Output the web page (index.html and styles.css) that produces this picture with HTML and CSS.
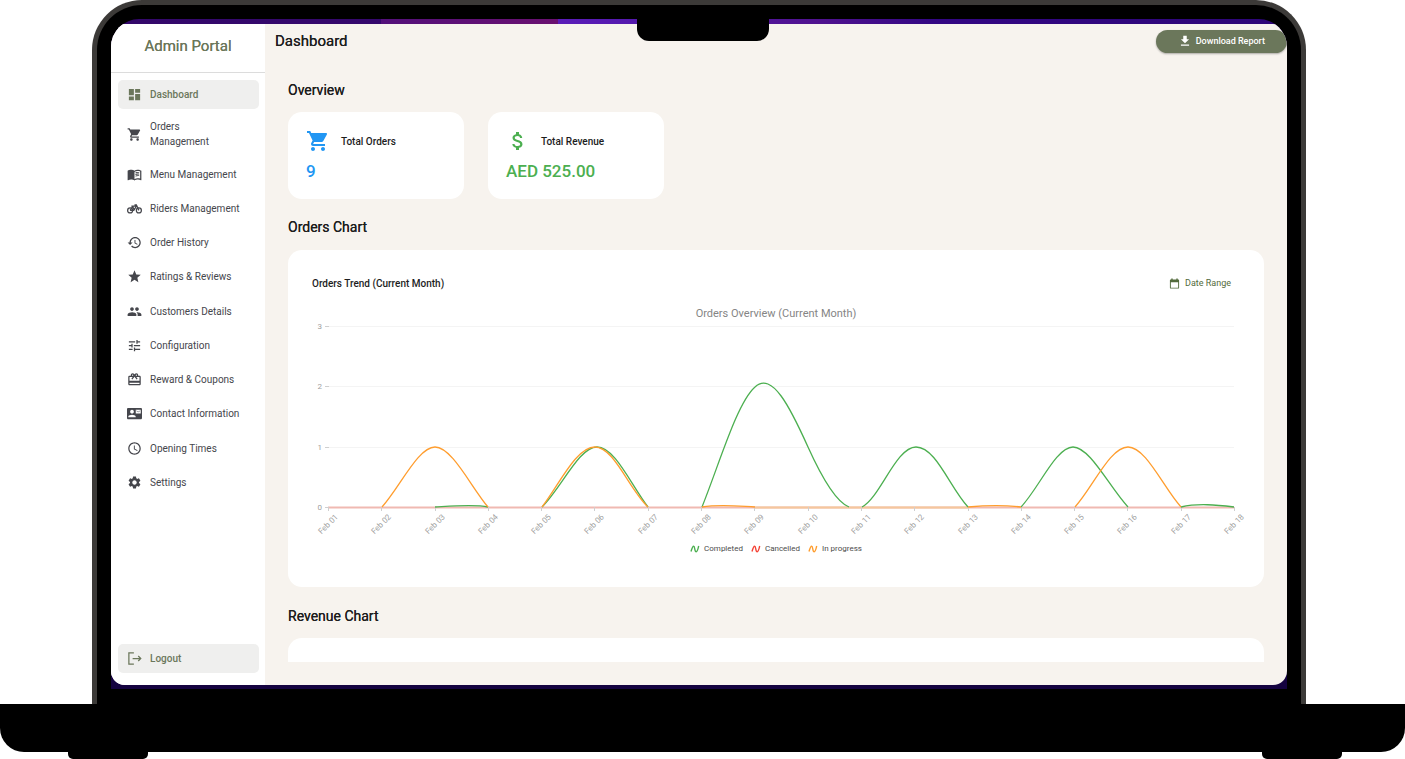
FILE: index.html
```html
<!DOCTYPE html>
<html lang="en">
<head>
    <meta charset="UTF-8">
    <title>Admin Portal</title>
    <meta name="viewport" content="width=device-width, initial-scale=1">
    <link rel="stylesheet" href="styles.css">
</head>
<body>
    <svg class="sprite" aria-hidden="true">
        <symbol id="i-cart" viewBox="0 0 24 24"><path d="M7 18c-1.1 0-1.99.9-1.99 2S5.9 22 7 22s2-.9 2-2-.9-2-2-2zM1 2v2h2l3.6 7.59-1.35 2.45c-.16.28-.25.61-.25.96 0 1.1.9 2 2 2h12v-2H7.42c-.14 0-.25-.11-.25-.25l.03-.12.9-1.63h7.45c.75 0 1.41-.41 1.75-1.03l3.58-6.49c.08-.14.12-.31.12-.48 0-.55-.45-1-1-1H5.21l-.94-2H1zm16 16c-1.1 0-1.99.9-1.99 2s.89 2 1.99 2 2-.9 2-2-.9-2-2-2z"/></symbol>
        <symbol id="i-dashboard" viewBox="0 0 24 24"><path d="M3 13h8V3H3v10zm0 8h8v-6H3v6zm10 0h8V11h-8v10zm0-18v6h8V3h-8z"/></symbol>
        <symbol id="i-book" viewBox="0 0 24 24"><path d="M21 5c-1.11-.35-2.33-.5-3.5-.5-1.95 0-4.05.4-5.5 1.5-1.45-1.1-3.55-1.5-5.5-1.5S2.45 4.9 1 6v14.65c0 .25.25.5.5.5.1 0 .15-.05.25-.05C3.1 20.45 5.05 20 6.5 20c1.95 0 4.05.4 5.5 1.5 1.35-.85 3.8-1.5 5.5-1.5 1.65 0 3.35.3 4.75 1.05.1.05.15.05.25.05.25 0 .5-.25.5-.5V6c-.6-.45-1.25-.75-2-1zm0 13.5c-1.1-.35-2.3-.5-3.5-.5-1.7 0-4.15.65-5.5 1.5V8c1.35-.85 3.8-1.5 5.5-1.5 1.2 0 2.4.15 3.5.5v11.5z"/><path d="M13.5 10c1.8-.8 4-1 6-.7V8c-2-.3-4.2-.1-6 .6V10zm0 2.700c1.8-.8 4-1 6-.7v-1.300c-2-.3-4.2-.1-6 .6v1.400zm0 2.600c1.8-.8 4-1 6-.7v-1.300c-2-.3-4.2-.1-6 .6v1.400z"/></symbol>
        <symbol id="i-bike" viewBox="0 0 24 24"><g fill="none" stroke="currentColor" stroke-width="2"><circle cx="5" cy="15" r="4"/><circle cx="19" cy="15" r="4"/><path d="M5 15h6l4-7H9l2.5 7M12 6h3l4 9M7 8h4M5 15l4-6"/></g></symbol>
        <symbol id="i-history" viewBox="0 0 24 24"><path d="M13 3c-4.97 0-9 4.03-9 9H1l3.89 3.89.07.14L9 12H6c0-3.87 3.13-7 7-7s7 3.13 7 7-3.13 7-7 7c-1.93 0-3.68-.79-4.94-2.06l-1.42 1.42C8.27 19.99 10.51 21 13 21c4.97 0 9-4.03 9-9s-4.03-9-9-9zm-1 5v5l4.28 2.54.72-1.21-3.5-2.08V8H12z"/></symbol>
        <symbol id="i-star" viewBox="0 0 24 24"><path d="M12 17.27L18.18 21l-1.64-7.03L22 9.24l-7.19-.61L12 2 9.19 8.63 2 9.24l5.46 4.73L5.82 21z"/></symbol>
        <symbol id="i-people" viewBox="0 0 24 24"><path d="M16 11c1.66 0 2.99-1.34 2.99-3S17.66 5 16 5s-3 1.34-3 3 1.34 3 3 3zm-8 0c1.66 0 2.99-1.34 2.99-3S9.66 5 8 5 5 6.34 5 8s1.34 3 3 3zm0 2c-2.33 0-7 1.17-7 3.5V19h14v-2.5c0-2.33-4.67-3.5-7-3.5zm8 0c-.29 0-.62.02-.97.05 1.16.84 1.97 1.97 1.97 3.45V19h6v-2.5c0-2.33-4.67-3.5-7-3.5z"/></symbol>
        <symbol id="i-tune" viewBox="0 0 24 24"><path d="M3 17v2h6v-2H3zM3 5v2h10V5H3zm10 16v-2h8v-2h-8v-2h-2v6h2zM7 9v2H3v2h4v2h2V9H7zm14 4v-2H11v2h10zm-6-4h2V7h4V5h-4V3h-2v6z"/></symbol>
        <symbol id="i-gift" viewBox="0 0 24 24"><path d="M20 6h-2.18c.11-.31.18-.65.18-1 0-1.66-1.34-3-3-3-1.05 0-1.96.54-2.5 1.35l-.5.67-.5-.68C10.96 2.54 10.05 2 9 2 7.34 2 6 3.34 6 5c0 .35.07.69.18 1H4c-1.11 0-1.99.89-1.99 2L2 19c0 1.11.89 2 2 2h16c1.11 0 2-.89 2-2V8c0-1.11-.89-2-2-2zm-5-2c.55 0 1 .45 1 1s-.45 1-1 1-1-.45-1-1 .45-1 1-1zM9 4c.55 0 1 .45 1 1s-.45 1-1 1-1-.45-1-1 .45-1 1-1zm11 15H4v-2h16v2zm0-5H4V8h5.08L7 10.83 8.62 12 12 7.4l3.38 4.6L17 10.83 14.92 8H20v6z"/></symbol>
        <symbol id="i-contact" viewBox="0 0 24 24"><path d="M22 3H2C.9 3 0 3.9 0 5v14c0 1.1.9 2 2 2h20c1.1 0 1.99-.9 1.99-2L24 5c0-1.1-.9-2-2-2zM8 6c1.66 0 3 1.34 3 3s-1.34 3-3 3-3-1.34-3-3 1.34-3 3-3zm6 12H2v-1c0-2 4-3.1 6-3.1s6 1.1 6 3.1v1zm8-6h-8V6h8v6zm-1-5l-3 2-3-2v1l3 2 3-2z"/></symbol>
        <symbol id="i-clock" viewBox="0 0 24 24"><path d="M11.99 2C6.47 2 2 6.48 2 12s4.47 10 9.99 10C17.52 22 22 17.52 22 12S17.52 2 11.99 2zM12 20c-4.42 0-8-3.58-8-8s3.58-8 8-8 8 3.58 8 8-3.58 8-8 8zm.5-13H11v6l5.25 3.15.75-1.23-4.5-2.67z"/></symbol>
        <symbol id="i-gear" viewBox="0 0 24 24"><path d="M19.14 12.94c.04-.3.06-.61.06-.94 0-.32-.02-.64-.07-.94l2.03-1.58c.18-.14.23-.41.12-.61l-1.92-3.32c-.12-.22-.37-.29-.59-.22l-2.39.96c-.5-.38-1.03-.7-1.62-.94l-.36-2.54c-.04-.24-.24-.41-.48-.41h-3.84c-.24 0-.43.17-.47.41l-.36 2.54c-.59.24-1.13.57-1.62.94l-2.39-.96c-.22-.08-.47 0-.59.22L2.74 8.87c-.12.21-.08.47.12.61l2.03 1.58c-.05.3-.09.63-.09.94s.02.64.07.94l-2.03 1.58c-.18.14-.23.41-.12.61l1.92 3.32c.12.22.37.29.59.22l2.39-.96c.5.38 1.03.7 1.62.94l.36 2.54c.05.24.24.41.48.41h3.84c.24 0 .44-.17.47-.41l.36-2.54c.59-.24 1.13-.56 1.62-.94l2.39.96c.22.08.47 0 .59-.22l1.92-3.32c.12-.22.07-.47-.12-.61l-2.01-1.58zM12 15.6c-1.98 0-3.6-1.62-3.6-3.6s1.62-3.6 3.6-3.6 3.6 1.62 3.6 3.6-1.62 3.6-3.6 3.6z"/></symbol>
        <symbol id="i-logout" viewBox="0 0 24 24"><path fill="none" stroke="currentColor" stroke-width="2" d="M11 3H3v18h8M9 12h13M18 8l4 4-4 4"/></symbol>
        <symbol id="i-download" viewBox="0 0 24 24"><path d="M19 9h-4V3H9v6H5l7 7 7-7zM5 18v2h14v-2H5z"/></symbol>
        <symbol id="i-dollar" viewBox="0 0 24 24"><path d="M11.8 10.9c-2.27-.59-3-1.2-3-2.15 0-1.09 1.01-1.85 2.7-1.85 1.78 0 2.44.85 2.5 2.1h2.21c-.07-1.72-1.12-3.3-3.21-3.81V3h-3v2.16c-1.94.42-3.5 1.68-3.5 3.61 0 2.31 1.91 3.46 4.7 4.13 2.5.6 3 1.48 3 2.41 0 .69-.49 1.79-2.7 1.79-2.06 0-2.87-.92-2.98-2.1h-2.2c.12 2.19 1.76 3.42 3.68 3.83V21h3v-2.15c1.95-.37 3.5-1.5 3.5-3.55 0-2.84-2.43-3.81-4.7-4.4z"/></symbol>
        <symbol id="i-calendar" viewBox="0 0 24 24"><path d="M20 3h-1V1h-3v2H8V1H5v2H4c-1.1 0-2 .9-2 2v16c0 1.1.9 2 2 2h16c1.1 0 2-.9 2-2V5c0-1.1-.9-2-2-2zm0 18H4V9h16v12z"/></symbol>
        <symbol id="i-wave" viewBox="0 0 10 10"><path fill="none" stroke="currentColor" stroke-width="1.4" d="M1 7.500C2 4 2.600 2.200 3.600 2.200C5.200 2.200 4.300 7.800 6.200 7.800C7.600 7.800 8 5 8.700 2"/></symbol>
    </svg>

    <div class="laptop">
        <div class="notch"></div>
        <div class="lid">
            <div class="screen">
                <div class="app">
                    <aside class="sidebar">
                        <div class="brand">Admin Portal</div>
                        <nav class="nav">
                            <ul class="nav-list">
                                <li><a class="nav-item active" href="#"><svg class="icon"><use href="#i-dashboard"/></svg>Dashboard</a></li>
                                <li><a class="nav-item" href="#"><svg class="icon"><use href="#i-cart"/></svg><span>Orders<br>Management</span></a></li>
                                <li><a class="nav-item" href="#"><svg class="icon"><use href="#i-book"/></svg>Menu Management</a></li>
                                <li><a class="nav-item" href="#"><svg class="icon"><use href="#i-bike"/></svg>Riders Management</a></li>
                                <li><a class="nav-item" href="#"><svg class="icon"><use href="#i-history"/></svg>Order History</a></li>
                                <li><a class="nav-item" href="#"><svg class="icon"><use href="#i-star"/></svg>Ratings &amp; Reviews</a></li>
                                <li><a class="nav-item" href="#"><svg class="icon"><use href="#i-people"/></svg>Customers Details</a></li>
                                <li><a class="nav-item" href="#"><svg class="icon"><use href="#i-tune"/></svg>Configuration</a></li>
                                <li><a class="nav-item" href="#"><svg class="icon"><use href="#i-gift"/></svg>Reward &amp; Coupons</a></li>
                                <li><a class="nav-item" href="#"><svg class="icon"><use href="#i-contact"/></svg>Contact Information</a></li>
                                <li><a class="nav-item" href="#"><svg class="icon"><use href="#i-clock"/></svg>Opening Times</a></li>
                                <li><a class="nav-item" href="#"><svg class="icon"><use href="#i-gear"/></svg>Settings</a></li>
                            </ul>
                            <button class="nav-item active" type="button"><svg class="icon"><use href="#i-logout"/></svg>Logout</button>
                        </nav>
                    </aside>

                    <main class="main">
                        <header class="topbar">
                            <h1 class="page-title">Dashboard</h1>
                            <button class="download" type="button"><svg class="icon-medium"><use href="#i-download"/></svg>Download Report</button>
                        </header>
                        <div class="content">
                            <h2 class="section-title">Overview</h2>
                            <div class="stats">
                                <div class="card stat blue">
                                    <div class="stat-head"><svg class="icon-large"><use href="#i-cart"/></svg><span class="stat-label">Total Orders</span></div>
                                    <div class="stat-value">9</div>
                                </div>
                                <div class="card stat green">
                                    <div class="stat-head"><svg class="icon-large"><use href="#i-dollar"/></svg><span class="stat-label">Total Revenue</span></div>
                                    <div class="stat-value">AED 525.00</div>
                                </div>
                            </div>

                            <h2 class="section-title">Orders Chart</h2>
                            <section class="card chart-card">
                                <div class="chart-head">
                                    <h3 class="chart-title">Orders Trend (Current Month)</h3>
                                    <button class="date-range" type="button"><svg class="icon-small"><use href="#i-calendar"/></svg>Date Range</button>
                                </div>
                                <div class="chart-caption">Orders Overview (Current Month)</div>
                                <svg class="chart" viewBox="0 0 928 224">
                                    <g class="grid">
                                        <path d="M16 6.500H922M16 66.500H922M16 127.500H922"/>
                                    </g>
                                    <path class="tick" d="M13 6.500h4M13 66.500h4M13 127.500h4M13 187.500h4"/>
                                    <g class="axis-label y">
                                        <text x="10" y="9">3</text>
                                        <text x="10" y="69">2</text>
                                        <text x="10" y="130">1</text>
                                        <text x="10" y="190">0</text>
                                    </g>
                                    <path class="baseline" d="M16 187.500H922"/>
                                    <path class="baseline warm" d="M443 187.500H656"/>
                                    <path class="tick" id="x-ticks"/>
                                    <g class="axis-label" id="x-labels"></g>
                                    <path class="line completed" d="M123 187C140 186 163 184 176 187M230 187C250 167 267 127 285 127S319 165 336 187M390 187C408 142 425 83 443 67C460 51 478 87 496 127C510 158 524 182 537 187M550 187C568 178 584 127 604 127S638 168 656 187M709 187C727 168 744 127 761 127S798 168 816 187M869 187C886 183 905 185 922 187"/>
                                    <path class="line progress" d="M70 187C88 167 106 127 123 127S159 167 176 187M230 187C247 165 264 127 283 127S317 169 336 187M390 187C408 184 425 186 443 187M656 187C678 185 692 185 709 187M763 187C781 167 798 127 816 127S851 167 869 187"/>
                                </svg>
                                <div class="legend">
                                    <span class="legend-item"><svg class="wave green"><use href="#i-wave"/></svg>Completed</span>
                                    <span class="legend-item"><svg class="wave red"><use href="#i-wave"/></svg>Cancelled</span>
                                    <span class="legend-item"><svg class="wave orange"><use href="#i-wave"/></svg>In progress</span>
                                </div>
                            </section>

                            <h2 class="section-title">Revenue Chart</h2>
                            <section class="card revenue-card"></section>
                        </div>
                    </main>
                </div>
            </div>
        </div>
        <div class="base"></div>
        <div class="feet"><span class="foot"></span><span class="foot"></span></div>
    </div>

    <script>
        // x axis: one tick and one slanted label per day
        var ticks = '';
        var labels = '';
        for (var i = 0; i < 18; i++) {
            var x = Math.round(16 + i * 906 / 17);
            var day = i < 9 ? '0' + (i + 1) : i + 1;
            ticks += 'M' + (x + 0.5) + ' 187v4';
            labels += '<text transform="translate(' + (x + 2) + ' 206) rotate(-45)">Feb ' + day + '</text>';
        }
        document.querySelector('#x-ticks').setAttribute('d', ticks);
        document.querySelector('#x-labels').innerHTML = labels;
    </script>
</body>
</html>
```
FILE: styles.css
```css
:root {
    --olive: #6b775b;
    --cream: #f7f3ee;
    --ink: #1d1d1d;
    --green: #4caf50;
    --blue: #2196f3;
    --orange: #ff9d2e;
}
* {
    box-sizing: border-box;
}
body {
    margin: 0;
    background: #fff;
    font-family: Roboto, "Liberation Sans", sans-serif;
    color: var(--ink);
}
h1, h2, h3, ul {
    margin: 0;
    padding: 0;
}
button {
    border: 0;
    font-family: inherit;
    cursor: pointer;
}
svg {
    display: block;
    flex: none;
    fill: currentColor;
}
.sprite {
    position: absolute;
    width: 0;
    height: 0;
}

/* laptop */
.laptop {
    position: relative;
}
.notch {
    position: absolute;
    z-index: 1;
    top: 12px;
    left: calc(50% - 66px);
    width: 132px;
    height: 29px;
    border-radius: 0 0 12px 12px;
    background: #000;
}
.lid {
    margin: 0 99px 0 92px;
    padding: 14px 14px 15px;
    border: 5px solid #3c3a38;
    border-bottom: 0;
    border-radius: 50px 50px 0 0;
    background: #000;
}
.screen {
    padding: 5px 0 4px;
    border-radius: 28px 28px 0 0;
    overflow: hidden;
    background:
        linear-gradient(90deg, #33086a 0, #35086d 23%, #53107a 23%, #6a1070 38%, #5a1cb8 38%, #5318ab 46%, #50128f 60%, #330783 70%, #2d0678 100%) top / 100% 50% no-repeat,
        #150340;
}
.app {
    display: flex;
    border-radius: 14px;
    overflow: hidden;
    background: var(--cream);
}
.base {
    height: 48px;
    border-radius: 0 0 24px 24px;
    background: #000;
}
.feet {
    display: flex;
    justify-content: space-between;
    padding: 0 63px 0 68px;
}
.foot {
    width: 80px;
    height: 7px;
    border-radius: 0 0 5px 5px;
    background: #000;
}

/* sidebar */
.sidebar {
    display: flex;
    flex-direction: column;
    flex: none;
    width: 154px;
    background: #fff;
}
.brand {
    height: 49px;
    border-bottom: 1px solid #dcdcdc;
    font-size: 15px;
    line-height: 44px;
    text-align: center;
    text-shadow: 0 0 0 currentColor;
    color: var(--olive);
}
.nav {
    display: flex;
    flex-direction: column;
    flex: 1;
    gap: 147px;
    padding: 7px 6px 12px 7px;
}
.nav-list {
    display: flex;
    flex-direction: column;
    flex: 1;
    justify-content: space-between;
    list-style: none;
}
.nav-item {
    display: flex;
    align-items: center;
    gap: 8px;
    width: 100%;
    min-height: 29px;
    padding: 5px 8px 5px 9px;
    border-radius: 5px;
    background: none;
    font-size: 10px;
    line-height: 15px;
    text-align: left;
    text-decoration: none;
    color: #45464c;
}
.nav-item.active {
    background: #efefee;
    font-weight: 500;
    color: var(--olive);
}
.icon {
    width: 15px;
    height: 15px;
}
.icon-small {
    width: 11px;
    height: 11px;
}
.icon-medium {
    width: 14px;
    height: 14px;
}
.icon-large {
    width: 24px;
    height: 24px;
}

/* main */
.main {
    flex: 1;
    min-width: 0;
}
.topbar {
    display: flex;
    align-items: center;
    justify-content: space-between;
    height: 34px;
    padding-left: 10px;
}
.page-title,
.section-title {
    font-size: 14px;
    font-weight: 400;
    line-height: 20px;
    text-shadow: 0 0 0 currentColor;
}
.page-title {
    font-size: 15px;
}
.download {
    display: flex;
    align-items: center;
    gap: 4px;
    height: 23px;
    padding: 0 22px;
    border-radius: 12px;
    background: var(--olive);
    box-shadow: 0 1px 2px rgba(0, 0, 0, .3);
    font-size: 9px;
    font-weight: 500;
    color: #fff;
}
.content {
    padding: 22px 23px 23px;
}
.card {
    border-radius: 14px;
    background: #fff;
}
.stats {
    display: flex;
    gap: 24px;
    margin: 12px 0 18px;
}
.stat {
    width: 176px;
    height: 87px;
    padding: 17px 18px;
}
.stat-head {
    display: flex;
    align-items: center;
    gap: 11px;
}
.stat-label {
    font-size: 10px;
    font-weight: 500;
    color: var(--ink);
}
.stat-value {
    margin-top: 6px;
    font-size: 17px;
    font-weight: 500;
    line-height: 24px;
}
.blue { color: var(--blue); }
.green { color: var(--green); }
.red { color: #f44336; }
.orange { color: var(--orange); }

/* chart */
.chart-card {
    margin: 13px 0 19px;
    padding: 24px 24px 33px;
}
.chart-head {
    display: flex;
    align-items: center;
    justify-content: space-between;
    height: 18px;
}
.chart-title {
    font-size: 10px;
    font-weight: 500;
}
.date-range {
    display: flex;
    align-items: center;
    gap: 5px;
    padding: 0 9px;
    background: none;
    font-size: 9px;
    color: #536b3c;
}
.chart-caption {
    margin-top: 16px;
    font-size: 11px;
    line-height: 12px;
    text-align: center;
    color: #858585;
}
.chart {
    width: 100%;
    height: auto;
    overflow: visible;
}
.grid path {
    stroke: #f4f4f4;
}
.tick {
    stroke: #cfcfcf;
}
.baseline {
    stroke: #f0b9b2;
    stroke-width: 2;
}
.baseline.warm {
    stroke: #f5c79c;
}
.axis-label {
    font-size: 8px;
    fill: #a0a0a0;
    text-anchor: middle;
}
.axis-label.y {
    text-anchor: end;
}
.line {
    fill: none;
    stroke-width: 1.3;
}
.completed { stroke: var(--green); }
.progress { stroke: var(--orange); }
.legend {
    display: flex;
    justify-content: center;
    gap: 8px;
    font-size: 8px;
    line-height: 10px;
    color: #4c4c4c;
}
.legend-item {
    display: flex;
    align-items: center;
    gap: 4px;
}
.wave {
    width: 10px;
    height: 10px;
}

/* only the top of this card is in view */
.revenue-card {
    height: 24px;
    margin-top: 12px;
    border-radius: 14px 14px 0 0;
}
```
